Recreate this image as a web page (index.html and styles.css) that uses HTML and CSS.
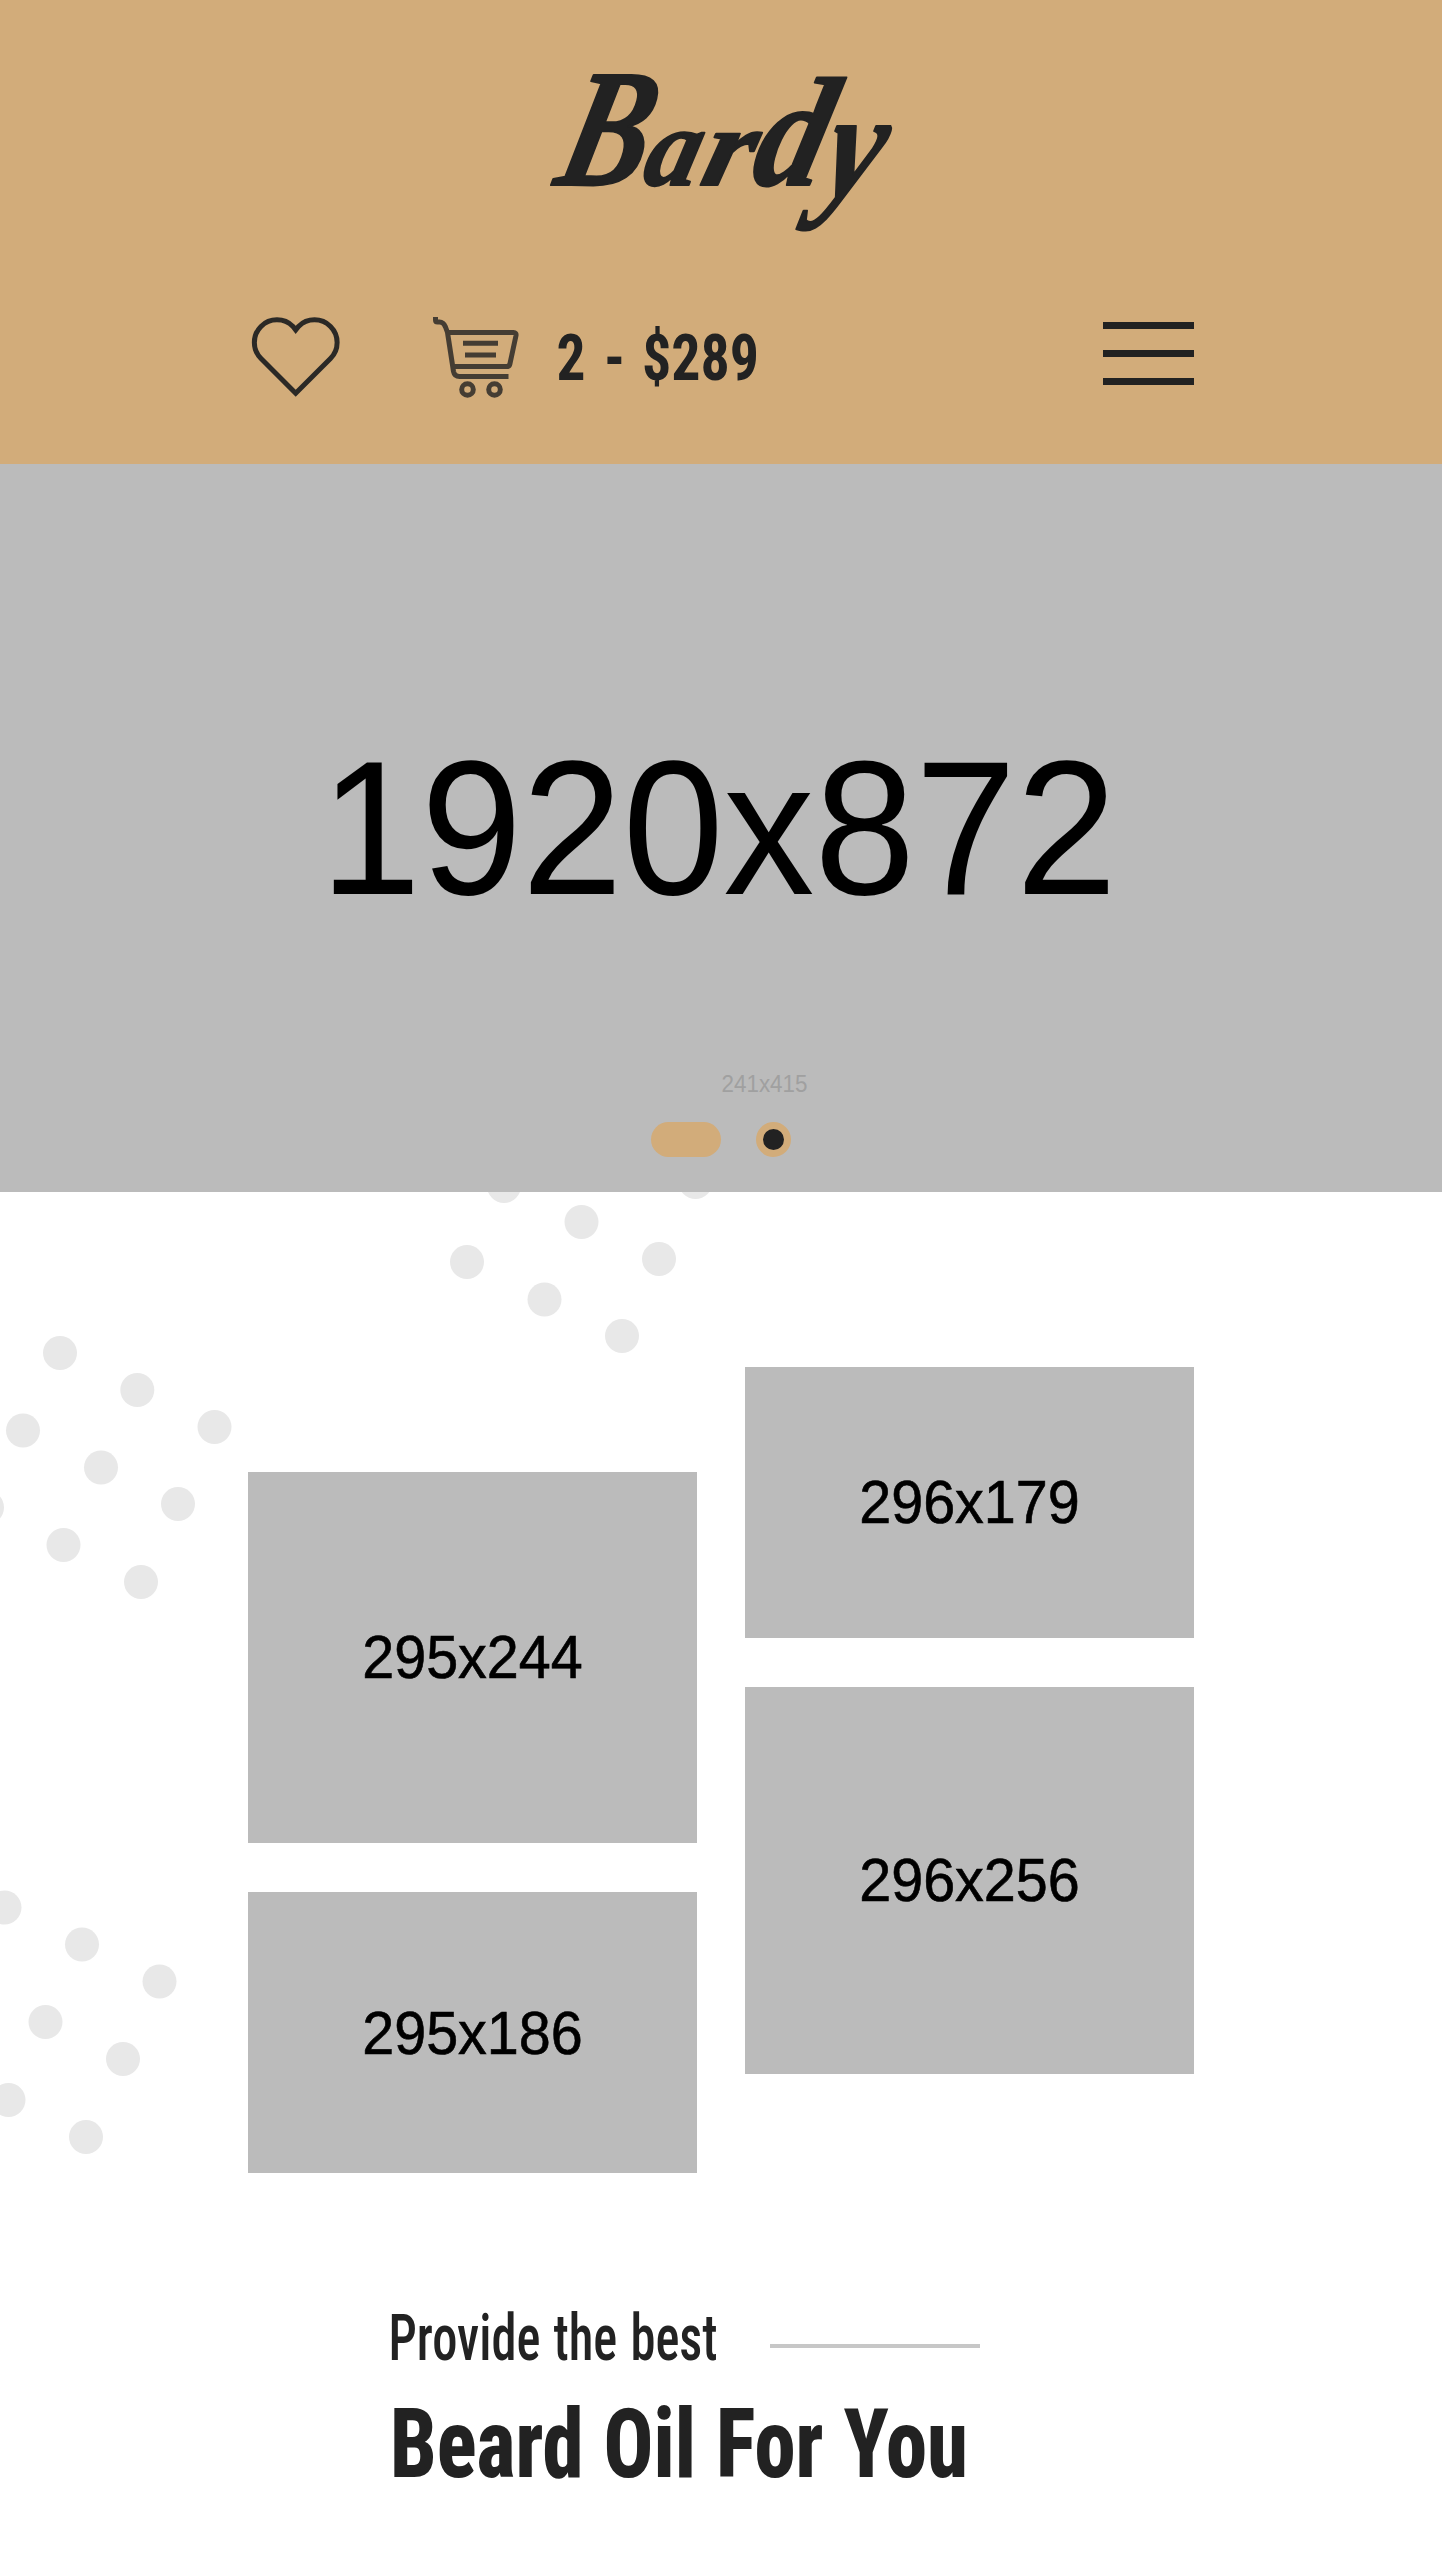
FILE: index.html
```html
<!DOCTYPE html>
<html lang="en">
<head>
<meta charset="utf-8">
<title>Bardy</title>
<link rel="stylesheet" href="styles.css">
</head>
<body>
<header class="header">
  <a class="logo" aria-label="Bardy">
    <svg width="360" height="180" viewBox="540 60 360 180">
      <text class="logo-text" transform="translate(0 185) skewX(-14)"><tspan class="logo-cap" x="552" textLength="88" lengthAdjust="spacingAndGlyphs">B</tspan><tspan x="640" textLength="54" lengthAdjust="spacingAndGlyphs">a</tspan><tspan x="698" textLength="50" lengthAdjust="spacingAndGlyphs">r</tspan><tspan class="logo-tall" x="748" textLength="70" lengthAdjust="spacingAndGlyphs">d</tspan><tspan class="logo-tail" x="820" dy="12" textLength="57" lengthAdjust="spacingAndGlyphs">y</tspan></text>
    </svg>
  </a>
  <div class="toolbar">
    <svg class="heart" width="94" height="90" viewBox="249 312 94 90">
      <path d="M295.7 393.2 L261 358.5 A22.6 22.6 0 1 1 293 326.500 L295.700 330 L298.500 326.500 A22.600 22.600 0 1 1 330.500 358.500 Z"/>
    </svg>
    <svg class="cart" width="94" height="90" viewBox="431 312 94 90">
      <path d="M435.500 317v3q0 2 2 2h2q4 0 6 5l2 5.500h66q3 0 2.500 3l-6 28q-.5 3-3.500 3h-53M447.500 332.500l6 39q1 5 6 5h49M463 343.300h35M465 355h31"/>
      <circle cx="467.500" cy="389.500" r="5.800"/><circle cx="494.500" cy="389.500" r="5.800"/>
    </svg>
    <svg class="total" width="210" height="80" viewBox="552 316 210 80">
      <text y="380"><tspan x="556.500" textLength="29" lengthAdjust="spacingAndGlyphs">2</tspan><tspan x="604" textLength="21" lengthAdjust="spacingAndGlyphs">-</tspan><tspan x="642" textLength="117" lengthAdjust="spacingAndGlyphs">$289</tspan></text>
    </svg>
    <div class="burger"><i></i><i></i><i></i></div>
  </div>
</header>
<section class="hero">
  <svg class="hero-label" width="800" height="160" viewBox="320 750 800 160"><text x="320" y="893.700" textLength="797" lengthAdjust="spacingAndGlyphs">1920x872</text></svg>
  <svg class="slide-label" width="100" height="30" viewBox="716 1068 100 30"><text x="721.500" y="1092" textLength="86" lengthAdjust="spacingAndGlyphs">241x415</text></svg>
  <div class="pager"><span class="pill"></span><span class="dot"></span></div>
</section>
<main class="about">
  <svg class="dots" width="1442" height="1370" viewBox="0 1192 1442 1370">
    <circle cx="504" cy="1186" r="17"/><circle cx="695.500" cy="1182" r="17"/><circle cx="581.500" cy="1222" r="17"/><circle cx="659" cy="1259" r="17"/><circle cx="467" cy="1262" r="17"/><circle cx="544.500" cy="1299.500" r="17"/><circle cx="622" cy="1336" r="17"/>
    <circle cx="60" cy="1353" r="17"/><circle cx="137.300" cy="1390" r="17"/><circle cx="214.500" cy="1427" r="17"/><circle cx="23" cy="1430.500" r="17"/><circle cx="101" cy="1467.500" r="17"/><circle cx="178" cy="1504" r="17"/><circle cx="-13" cy="1507.500" r="17"/><circle cx="63.500" cy="1545" r="17"/><circle cx="141" cy="1582" r="17"/>
    <circle cx="4.500" cy="1907.500" r="17"/><circle cx="82" cy="1944.500" r="17"/><circle cx="159.500" cy="1981.500" r="17"/><circle cx="45.500" cy="2022" r="17"/><circle cx="123" cy="2059" r="17"/><circle cx="8.500" cy="2100" r="17"/><circle cx="86" cy="2137" r="17"/>
  </svg>
  <div class="gallery">
    <div class="col col-left">
      <div class="ph h244"><span>295x244</span></div>
      <div class="ph h186"><span>295x186</span></div>
    </div>
    <div class="col">
      <div class="ph h179"><span>296x179</span></div>
      <div class="ph h256"><span>296x256</span></div>
    </div>
  </div>
  <div class="intro">
    <div class="sub">
      <svg width="340" height="80" viewBox="385 2300 340 80"><text x="388.500" y="2361" textLength="329" lengthAdjust="spacingAndGlyphs">Provide the best</text></svg>
      <span class="rule"></span>
    </div>
    <h2 class="title"><svg width="600" height="100" viewBox="385 2395 600 100"><text x="390" y="2478" textLength="578" lengthAdjust="spacingAndGlyphs">Beard Oil For You</text></svg></h2>
  </div>
</main>
</body>
</html>
```
FILE: styles.css
```css
* { box-sizing: border-box; }
body { margin: 0; width: 1442px; height: 2562px; overflow: hidden; background: #fff; color: #222; font-family: Roboto, sans-serif; }
svg { display: block; overflow: visible; }
text { fill: #222; }

.header { height: 464px; padding-top: 60px; background: #d2ac7a; }
.logo { display: block; margin-left: 540px; width: 360px; }
.logo-text { font: italic bold 112px "Liberation Serif", serif; stroke: #222; stroke-width: 2px; stroke-linejoin: round; }
.logo-cap { font-size: 168px; }
.logo-tall { font-size: 155px; }
.logo-tail { font-size: 155px; }

.toolbar { display: flex; align-items: flex-start; width: 945px; margin: 72px 0 0 249px; }
.heart path, .cart path, .cart circle { fill: none; stroke: #222; stroke-width: 5px; opacity: .95; }
.cart { margin-left: 88px; }
.cart path, .cart circle { stroke-width: 5px; stroke-linejoin: round; opacity: .8; }
.total { margin: 4px 0 0 27px; }
.total text { font-size: 64.5px; font-weight: 700; font-stretch: 75%; }
.burger { display: flex; flex-direction: column; gap: 21px; width: 91px; margin: 10px 0 0 auto; }
.burger i { height: 7px; background: #222; }

.hero { display: flex; flex-direction: column; height: 728px; padding-top: 286px; background: #bbb; }
.hero-label { margin-left: 320px; }
.hero-label text { font: 192px "Liberation Sans", sans-serif; fill: #000; }
.slide-label { margin: 158px 0 0 716px; }
.slide-label text { font: 24px "Liberation Sans", sans-serif; fill: #a0a0a0; }
.pager { display: flex; gap: 35px; margin: 23.500px 0 0 651px; }
.pill { width: 70px; height: 35px; border-radius: 18px; background: #d2ac7a; }
.dot { width: 35px; height: 35px; border: 7px solid #d2ac7a; border-radius: 50%; background: #222; }

.about { position: relative; height: 1370px; overflow: hidden; padding-top: 174.500px; }
.dots { position: absolute; top: 0; left: 0; fill: #e8e8e8; }
.gallery { position: relative; display: flex; gap: 48px; margin-left: 248px; }
.col { display: flex; flex-direction: column; gap: 49px; width: 449px; }
.col-left { padding-top: 105px; }
.ph { display: flex; align-items: center; justify-content: center; background: #bbb; }
.ph span { font: 57.500px/1 "Liberation Sans", sans-serif; color: #000; transform: scaleY(1.05); -webkit-text-stroke: .6px #000; }
.h244 { height: 371px; }
.h244 span, .h186 span { margin-top: 2px; }
.h186 { height: 281.500px; }
.h179 { height: 271.500px; }
.h256 { height: 387px; }

.intro { position: relative; margin: 126px 0 0 385px; }
.sub { display: flex; }
.sub text { font-size: 64.500px; font-weight: 500; font-stretch: 75%; word-spacing: 2px; }
.rule { width: 210px; height: 4px; margin: 45px 0 0 45px; background: #c7c7c7; }
.title { margin: 15px 0 0; }
.title text { font-size: 95.500px; font-weight: 800; font-stretch: 75%; word-spacing: 1px; }
```
